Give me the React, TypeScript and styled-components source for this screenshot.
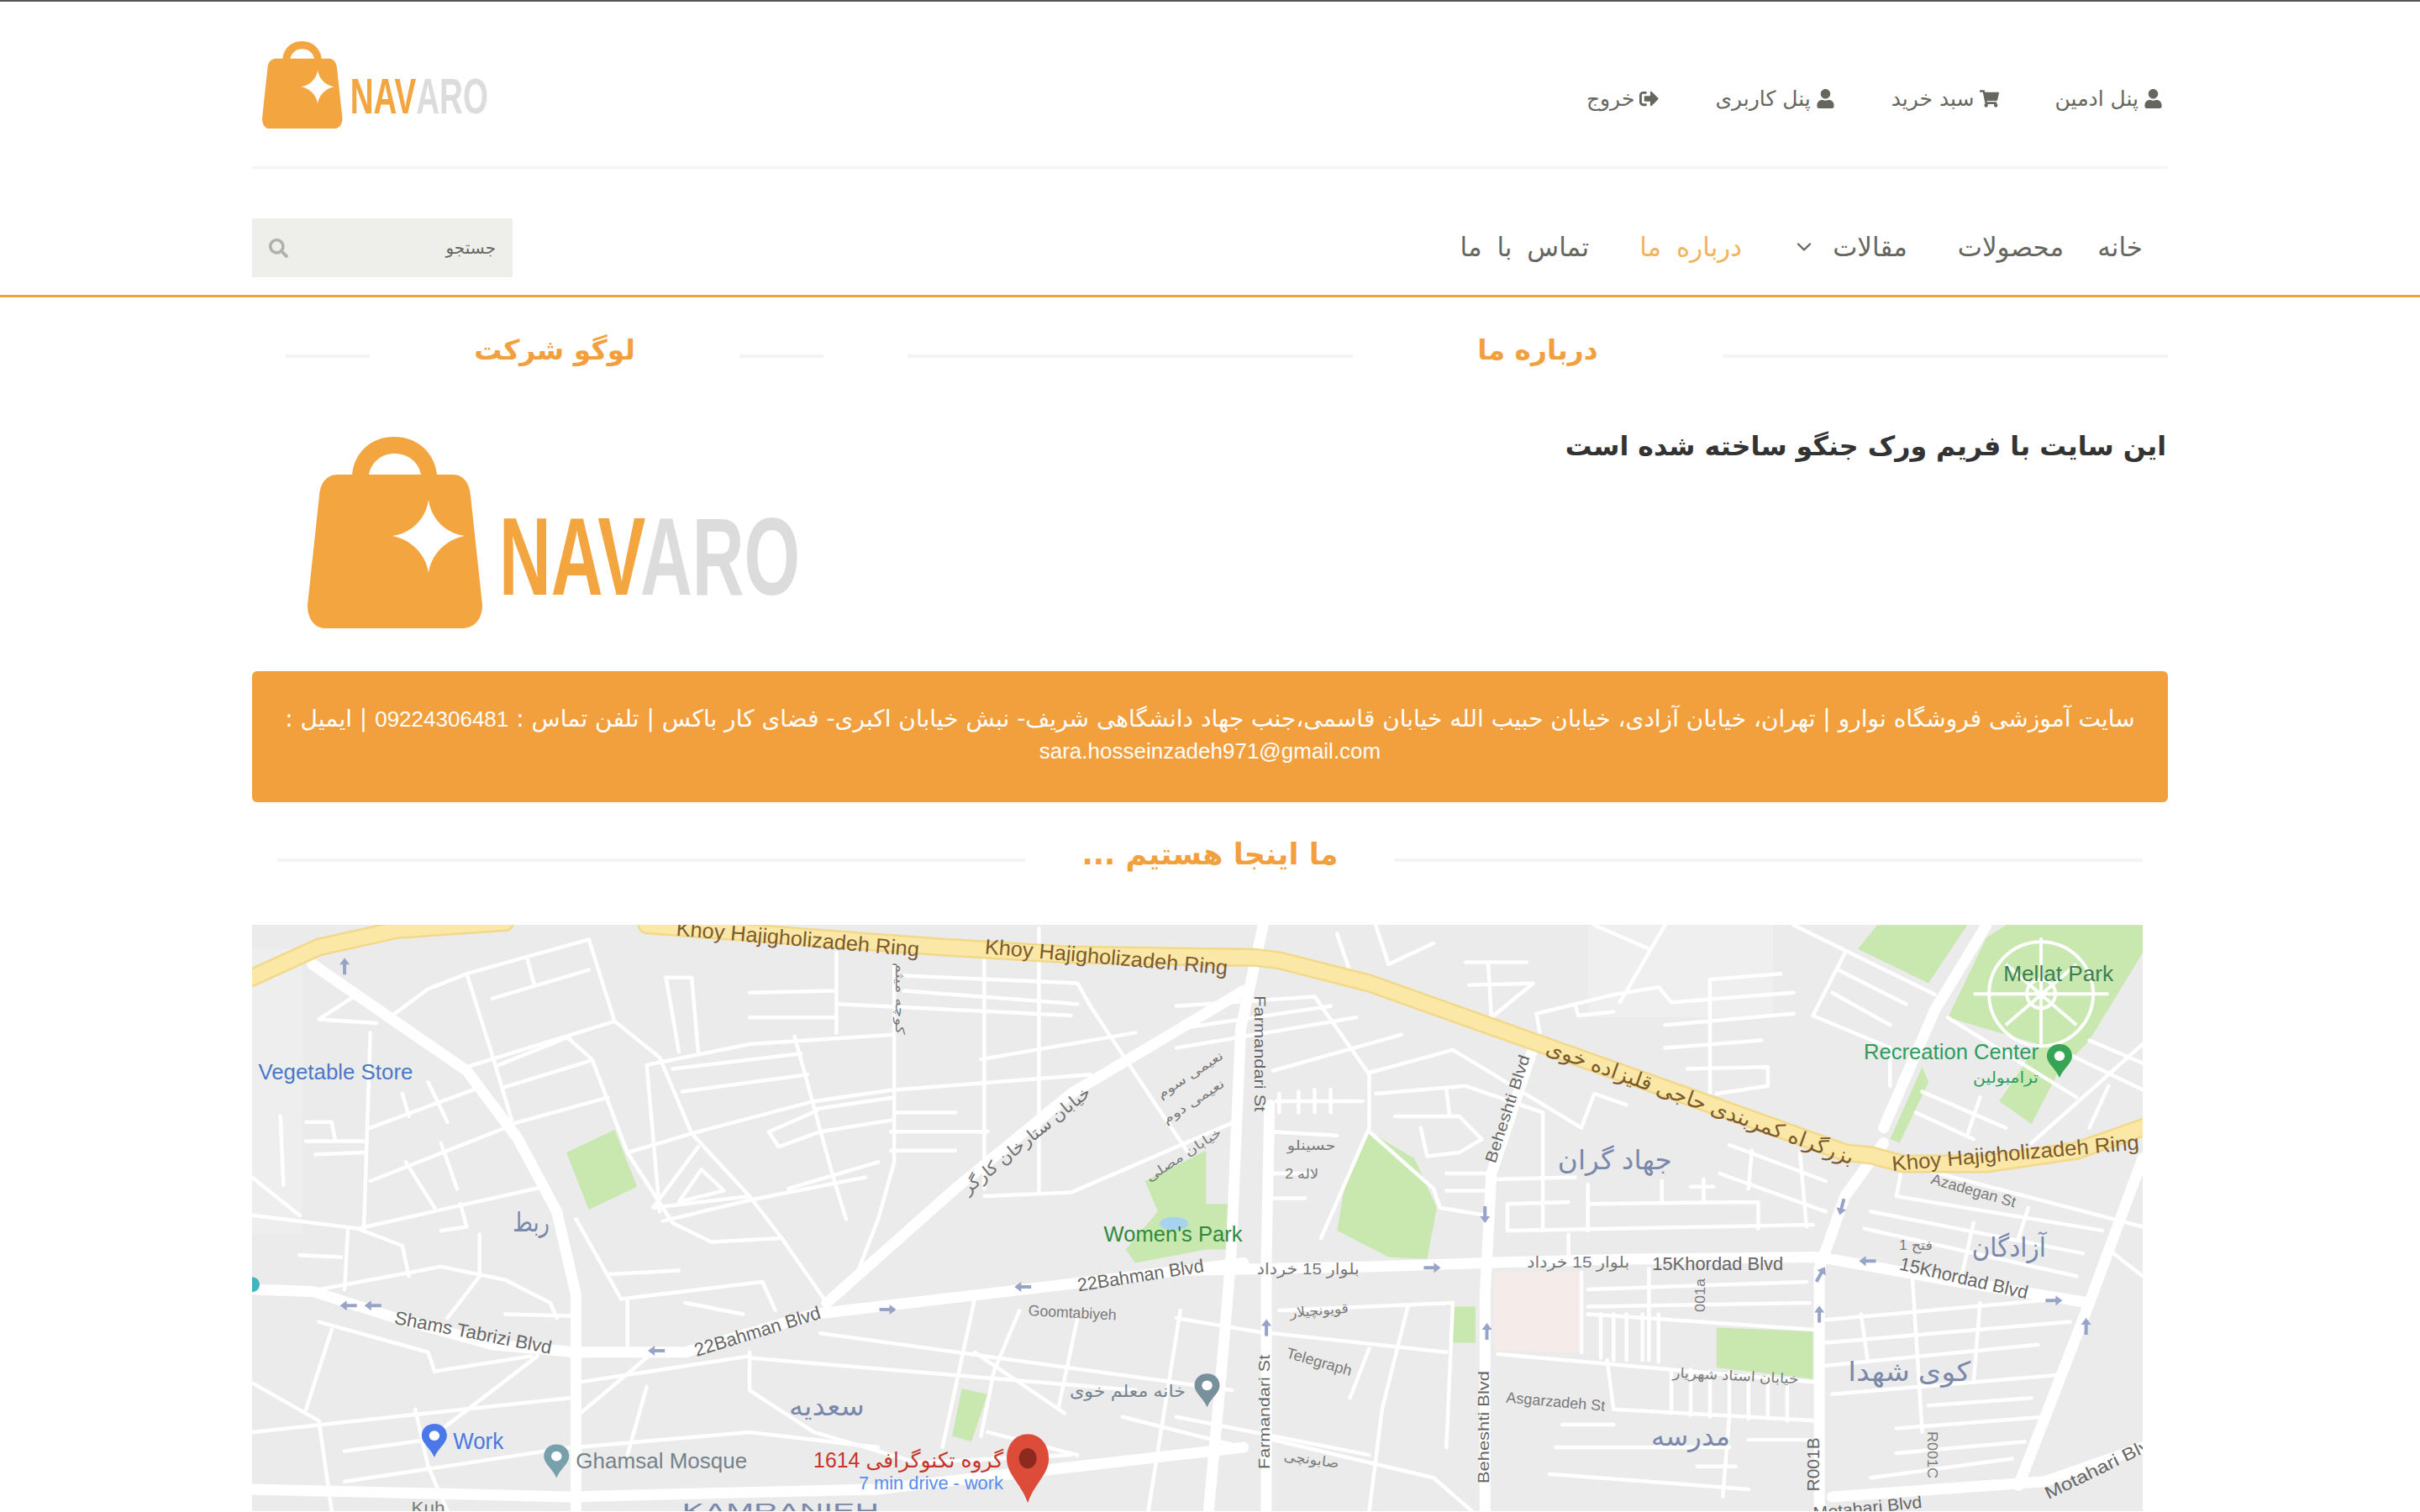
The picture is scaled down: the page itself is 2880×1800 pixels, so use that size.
import styled, { createGlobalStyle } from 'styled-components'
import { FaUser, FaShoppingCart, FaSignOutAlt, FaSearch } from 'react-icons/fa'
import { FiChevronDown } from 'react-icons/fi'

const ORANGE = '#f29f3e'
const FA_FONT = '"DejaVu Sans", sans-serif'
const LATIN_FONT = '"Liberation Sans", "DejaVu Sans", sans-serif'

const GlobalStyle = createGlobalStyle`
  html, body {
    margin: 0;
    padding: 0;
    background: #fff;
    overflow: hidden;
  }
  * { box-sizing: border-box; }
`

const Page = styled.div`
  direction: rtl;
  height: 1800px;
  overflow: hidden;
  border-top: 2px solid #555;
  font-family: ${LATIN_FONT};
`

const Wrap = styled.div`
  margin: 0 300px;
`

const TopBar = styled.div`
  height: 199px;
  border-bottom: 3px solid #f5f5f5;
  display: flex;
  align-items: center;
  justify-content: space-between;
  padding: 0 6px 0 12px;
`

const TopLinks = styled.div`
  display: flex;
  gap: 67px;
  margin-top: 35px;
`

const TopLink = styled.a`
  display: flex;
  align-items: center;
  gap: 6px;
  font-family: ${FA_FONT};
  font-size: 25px;
  color: #66665f;
  svg { font-size: 23px; }
`

const LogoBox = styled.div`
  margin-top: 2px;
  direction: ltr;
  display: flex;
`

const NavOuter = styled.div`
  border-bottom: 3px solid ${ORANGE};
  height: 153px;
`

const NavRow = styled(Wrap)`
  display: flex;
  justify-content: space-between;
  align-items: center;
  height: 150px;
  padding-top: 38px;
`

const NavList = styled.div`
  display: flex;
  align-items: center;
  gap: 60px;
  padding: 0 30px 3px 0;
`

const NavItem = styled.a<{ $active?: boolean; $tight?: boolean }>`
  display: flex;
  align-items: center;
  gap: 20px;
  margin-left: ${p => (p.$tight ? '-20px' : '0')};
  font-family: ${FA_FONT};
  font-size: 31px;
  word-spacing: 8px;
  color: ${p => (p.$active ? '#f4b25f' : '#66665f')};
  svg { font-size: 28px; }
`

const SearchBox = styled.div`
  width: 310px;
  height: 70px;
  background: #eeeeea;
  display: flex;
  align-items: center;
  justify-content: space-between;
  padding: 0 20px;
  font-family: ${FA_FONT};
  font-size: 20px;
  color: #666;
  svg {
    font-size: 23px;
    color: #b0b0ae;
  }
`

const TwoCols = styled(Wrap)`
  display: flex;
  justify-content: space-between;
  padding-top: 47px;
`

const MainCol = styled.div`
  width: 1500px;
`

const SideCol = styled.div`
  width: 640px;
  margin-left: 40px;
`

const SectionTitle = styled.div`
  display: flex;
  align-items: center;
  height: 46px;
`

const TitleLine = styled.div`
  flex: 1;
  height: 4px;
  background: #f4f4f4;
`

const TitleText = styled.h2<{ $size?: number }>`
  width: 440px;
  margin: 0;
  padding-bottom: 14px;
  text-align: center;
  font-family: ${FA_FONT};
  font-weight: 700;
  font-size: ${p => p.$size || 33}px;
  line-height: 46px;
  color: ${ORANGE};
`

const Lead = styled.p`
  margin: 62px 2px 0 0;
  font-family: ${FA_FONT};
  font-weight: 700;
  font-size: 31.7px;
  line-height: 44px;
  color: #333;
`

const BigLogo = styled.div`
  direction: ltr;
  display: flex;
  margin: 73px 0 0 26px;
`

const Alert = styled.div`
  margin-top: 51px;
  height: 156px;
  padding: 38px 20px 0;
  background: ${ORANGE};
  border-radius: 6px;
  text-align: center;
  font-family: ${FA_FONT};
  font-size: 28px;
  line-height: 38px;
  color: #fff;
`

const Latin = styled.span`
  font-family: ${LATIN_FONT};
  font-size: 26px;
`

const MapTitle = styled(SectionTitle)`
  margin: 46px 30px 54px;
`

const MapBox = styled.div`
  width: 2250px;
  height: 698px;
  margin-right: 30px;
  background: #ebebeb;
  direction: ltr;
  overflow: hidden;
  svg { display: block; }
`

const Logo = ({ scale }: { scale: number }) => (
  <svg width={590 * scale} height={228 * scale} viewBox="0 0 590 228">
    <path
      fillRule="evenodd"
      fill="#f3a53f"
      d="M53 45C56 18 76 0 103 0C130 0 151 18 154 45L173 45C186 45 193 56 194 70L208 200C208 218 198 228 183 228L22 228C9 228 0 218 0 200L14 70C15 56 22 45 36 45ZM73 45L135 45C132 30 120 20 103 20C88 20 76 30 73 45Z"
    />
    <path
      fill="#fff"
      d="M144 75C147 98 165 115 187 118C165 122 147 140 144 162C141 140 123 122 101 118C123 115 141 98 144 75Z"
    />
    <text x="228" y="188" fontFamily="Liberation Sans" fontWeight="700" fontSize="131" textLength="358" lengthAdjust="spacingAndGlyphs">
      <tspan fill="#f3a53f">NAV</tspan>
      <tspan fill="#dcdcdc">ARO</tspan>
    </text>
  </svg>
)

type Pt = [number, number]

// crop coordinates of the two map halves, converted to page coords
const ax = (x: number) => 280 + x / 1.307
const bx = (x: number) => 1400 + x / 1.307
const my = (y: number) => 1090 + y / 2.208

const linePath = (pts: Pt[], fx: (x: number) => number) =>
  pts.map((p, i) => `${i ? 'L' : 'M'}${fx(p[0]).toFixed(1)} ${my(p[1]).toFixed(1)}`).join('')

const MAJOR_A: Pt[][] = [
  [[26, 985], [120, 990], [250, 1060], [400, 1130], [530, 1150], [700, 1150], [900, 1050], [1150, 1000], [1400, 950], [1568, 915]],
  [[120, 130], [240, 270], [360, 410], [440, 590], [500, 780], [530, 1000], [530, 1568]],
  [[1568, 200], [1300, 470], [1120, 720], [920, 1020]],
  [[26, 1510], [520, 1530], [1000, 1510], [1568, 1400]],
]

const MAJOR_B: Pt[][] = [
  [[0, 935], [300, 925], [480, 915], [700, 905], [1000, 900], [1200, 960], [1420, 1020]],
  [[135, 27], [100, 300], [85, 900], [70, 1200], [50, 1568]],
  [[145, 500], [140, 900], [140, 1568]],
  [[555, 350], [490, 680], [480, 1000], [480, 1568]],
  [[1100, 600], [1040, 740], [1000, 930], [1000, 1568]],
  [[1503, 640], [1420, 1020], [1310, 1500]],
  [[1260, 27], [1180, 250], [1100, 560]],
  [[1020, 1530], [1350, 1490], [1503, 1400]],
]

const MINOR_A: Pt[][] = [
  [[550, 65], [360, 155], [300, 195], [240, 270]],
  [[550, 65], [590, 280], [660, 375], [710, 575], [800, 740], [850, 850], [920, 1020]],
  [[360, 155], [400, 370], [430, 540]],
  [[590, 280], [360, 400]],
  [[520, 320], [410, 395]],
  [[550, 385], [415, 455]],
  [[580, 480], [430, 550]],
  [[515, 320], [555, 380], [610, 625], [680, 810], [740, 860], [850, 850]],
  [[640, 395], [660, 780]],
  [[640, 395], [800, 340], [1025, 315]],
  [[680, 405], [880, 365]],
  [[695, 465], [890, 420]],
  [[710, 575], [900, 490], [1025, 460]],
  [[610, 625], [710, 575]],
  [[720, 610], [650, 770], [800, 740]],
  [[725, 670], [690, 755], [760, 725], [725, 670]],
  [[665, 805], [800, 750], [980, 690]],
  [[860, 720], [1000, 650]],
  [[870, 320], [930, 690], [950, 800]],
  [[905, 510], [1025, 480]],
  [[830, 570], [905, 515]],
  [[830, 570], [845, 610], [910, 570], [1020, 540]],
  [[1025, 130], [1025, 650], [1000, 800], [970, 930]],
  [[1165, 100], [1165, 720]],
  [[1030, 460], [1330, 420]],
  [[1030, 520], [1120, 520]],
  [[1020, 570], [1170, 570]],
  [[1020, 620], [1120, 620]],
  [[1160, 380], [1400, 310]],
  [[1250, 35], [1250, 730]],
  [[1165, 740], [1300, 730], [1560, 540]],
  [[800, 205], [930, 200]],
  [[800, 270], [930, 270]],
  [[935, 100], [935, 310]],
  [[940, 235], [1300, 265]],
  [[1040, 160], [1310, 180], [1330, 240], [1440, 520], [1480, 620]],
  [[1040, 200], [1310, 235]],
  [[670, 165], [710, 165], [720, 360]],
  [[670, 165], [690, 360]],
  [[400, 220], [550, 145]],
  [[455, 120], [465, 185]],
  [[210, 310], [200, 830]],
  [[220, 285], [130, 275], [180, 220]],
  [[70, 530], [75, 710]],
  [[26, 690], [100, 790]],
  [[26, 790], [190, 825], [480, 715]],
  [[190, 825], [260, 870], [270, 950]],
  [[210, 560], [370, 460]],
  [[260, 470], [270, 530]],
  [[300, 440], [330, 545]],
  [[110, 545], [150, 545], [155, 590]],
  [[110, 595], [200, 595]],
  [[125, 630], [200, 625]],
  [[210, 700], [300, 640], [420, 560]],
  [[265, 650], [310, 770]],
  [[320, 600], [345, 720]],
  [[350, 760], [360, 820], [320, 830]],
  [[175, 830], [170, 985]],
  [[100, 895], [165, 900]],
  [[380, 840], [380, 950], [330, 1060]],
  [[130, 985], [320, 925], [420, 960], [490, 1020], [500, 1060]],
  [[420, 1050], [530, 1055]],
  [[530, 800], [580, 950], [600, 1010]],
  [[580, 945], [690, 935]],
  [[600, 1010], [820, 965], [840, 1040]],
  [[700, 1020], [790, 1050]],
  [[610, 1010], [610, 1150]],
  [[130, 1070], [300, 1150], [310, 1200], [460, 1160]],
  [[150, 1090], [110, 1300]],
  [[26, 1230], [130, 1330], [150, 1568]],
  [[26, 1360], [520, 1270]],
  [[170, 1410], [300, 1380], [470, 1160]],
  [[280, 1300], [300, 1450], [330, 1568]],
  [[170, 1490], [520, 1400]],
  [[530, 1230], [800, 1160]],
  [[530, 1320], [650, 1150]],
  [[640, 1240], [610, 1420]],
  [[530, 1400], [800, 1360], [1000, 1400]],
  [[800, 1150], [800, 1250], [900, 1360], [1060, 1440], [1300, 1420]],
  [[800, 1165], [1400, 1250]],
  [[1150, 1010], [1100, 1400]],
  [[910, 1100], [1550, 1250]],
  [[1220, 1040], [1180, 1200], [1160, 1370]],
  [[1310, 1060], [1280, 1300]],
  [[1470, 1040], [1420, 1568]],
  [[1150, 1150], [1290, 1310]],
  [[1170, 1360], [1310, 1420]],
  [[1380, 1320], [1568, 1400]],
]

const MINOR_B: Pt[][] = [
  [[310, 27], [330, 130], [400, 75]],
  [[250, 50], [270, 150]],
  [[450, 125], [545, 125]],
  [[485, 130], [490, 270]],
  [[455, 185], [555, 180], [490, 270]],
  [[560, 260], [680, 210], [750, 190], [770, 230], [960, 205]],
  [[560, 260], [565, 310]],
  [[620, 235], [625, 265], [680, 255]],
  [[650, 27], [735, 90]],
  [[760, 27], [690, 230]],
  [[830, 170], [940, 155]],
  [[830, 170], [830, 480]],
  [[760, 290], [960, 260]],
  [[760, 350], [910, 330]],
  [[795, 405], [920, 400], [920, 450], [840, 470]],
  [[960, 27], [1180, 210]],
  [[1040, 100], [990, 265], [1110, 350], [1110, 450]],
  [[1030, 145], [1135, 235]],
  [[1020, 205], [1110, 290]],
  [[1200, 270], [1400, 480]],
  [[1160, 465], [1290, 560]],
  [[1150, 520], [1240, 590]],
  [[1250, 480], [1230, 580]],
  [[1380, 360], [1503, 460]],
  [[1420, 330], [1503, 390]],
  [[1450, 450], [1420, 560]],
  [[1503, 340], [1330, 600]],
  [[0, 240], [215, 215], [300, 420], [300, 560], [225, 850]],
  [[0, 350], [280, 270]],
  [[0, 300], [240, 240]],
  [[150, 410], [350, 315]],
  [[300, 415], [430, 355], [630, 560], [650, 470], [700, 500]],
  [[310, 470], [450, 450], [570, 520], [570, 830]],
  [[420, 460], [425, 530]],
  [[155, 490], [290, 490]],
  [[160, 470], [160, 520]],
  [[190, 465], [190, 520]],
  [[215, 460], [215, 520]],
  [[240, 460], [240, 520]],
  [[145, 570], [250, 580]],
  [[150, 680], [210, 680]],
  [[145, 745], [200, 745]],
  [[340, 530], [440, 530], [475, 590], [440, 625], [390, 635], [380, 560]],
  [[300, 570], [400, 720], [410, 770], [480, 790]],
  [[420, 680], [480, 680]],
  [[420, 725], [480, 725]],
  [[500, 695], [620, 690]],
  [[515, 760], [610, 755]],
  [[515, 760], [515, 830], [990, 815]],
  [[640, 760], [905, 755], [905, 825]],
  [[640, 710], [640, 830]],
  [[755, 700], [755, 755]],
  [[820, 695], [820, 755]],
  [[800, 715], [835, 715]],
  [[845, 680], [1010, 780]],
  [[860, 605], [1010, 700]],
  [[895, 620], [890, 720]],
  [[970, 625], [980, 820]],
  [[610, 840], [610, 900]],
  [[1130, 650], [1120, 740], [1440, 830]],
  [[1080, 780], [1410, 890]],
  [[1070, 825], [1400, 950]],
  [[1240, 810], [1220, 960]],
  [[1325, 770], [1310, 850]],
  [[1140, 660], [1503, 820]],
  [[1450, 880], [1503, 950]],
  [[630, 940], [630, 1150]],
  [[640, 985], [980, 965]],
  [[640, 1030], [985, 1020]],
  [[735, 930], [735, 1170]],
  [[640, 1050], [990, 1090]],
  [[660, 1050], [660, 1165]],
  [[680, 1050], [680, 1170]],
  [[700, 1050], [700, 1170]],
  [[725, 1050], [725, 1170]],
  [[750, 1050], [750, 1175]],
  [[500, 1155], [1000, 1230]],
  [[1010, 1065], [1370, 1010]],
  [[1010, 1125], [1390, 1070]],
  [[1010, 1185], [1340, 1130]],
  [[1020, 1260], [1370, 1210]],
  [[1065, 1050], [1075, 1170]],
  [[1145, 960], [1160, 1360]],
  [[1250, 1020], [1240, 1230]],
  [[1170, 1290], [1330, 1270]],
  [[1120, 1350], [1350, 1320]],
  [[1120, 1415], [1320, 1385]],
  [[1080, 1480], [1300, 1430]],
  [[770, 1195], [770, 1310]],
  [[800, 1195], [800, 1315]],
  [[830, 1200], [830, 1320]],
  [[860, 1205], [860, 1320]],
  [[890, 1210], [890, 1325]],
  [[920, 1215], [920, 1325]],
  [[950, 1220], [950, 1330]],
  [[680, 1300], [1000, 1330]],
  [[680, 1300], [670, 1170]],
  [[860, 1320], [850, 1530]],
  [[580, 1470], [890, 1510]],
  [[600, 1340], [680, 1340]],
  [[590, 1400], [860, 1400]],
  [[890, 1380], [985, 1380]],
  [[810, 1450], [870, 1450]],
  [[160, 1040], [430, 1020], [420, 1400]],
  [[150, 1100], [420, 1150]],
  [[0, 1060], [140, 1100]],
  [[360, 1030], [320, 1300], [300, 1568]],
  [[150, 1380], [400, 1480], [460, 1568]],
  [[300, 1140], [270, 1270]],
  [[0, 1320], [300, 1420]],
]

const HIGHWAY_A: Pt[][] = [
  [[26, 165], [130, 85], [250, 40], [420, 20]],
  [[640, 27], [900, 60], [1100, 85], [1300, 105], [1568, 112]],
]

const HIGHWAY_B: Pt[] = [
  [0, 110], [120, 112], [160, 120], [300, 180], [550, 330], [800, 480], [1040, 625], [1080, 632], [1130, 655], [1260, 655], [1400, 620], [1510, 555],
]

const GREENS: { at: 'a' | 'b'; pts: Pt[]; fill?: string }[] = [
  { at: 'a', pts: [[515, 625], [590, 565], [625, 715], [550, 775]] },
  { at: 'a', pts: [[1415, 700], [1510, 620], [1510, 760], [1545, 760], [1545, 880], [1510, 880], [1400, 915], [1385, 880], [1435, 780]] },
  { at: 'a', pts: [[1130, 1245], [1170, 1260], [1145, 1385], [1115, 1370]] },
  { at: 'b', pts: [[300, 570], [370, 640], [405, 770], [390, 905], [330, 900], [250, 830], [265, 680]] },
  { at: 'b', pts: [[1060, 90], [1090, 27], [1230, 27], [1170, 180]] },
  { at: 'b', pts: [[1290, 27], [1503, 27], [1503, 100], [1420, 330], [1370, 420], [1330, 550], [1280, 490], [1340, 340], [1200, 270], [1260, 60]] },
  { at: 'b', pts: [[430, 1030], [465, 1030], [465, 1125], [430, 1125]] },
  { at: 'b', pts: [[840, 1085], [990, 1095], [990, 1220], [840, 1190]] },
  { at: 'b', pts: [[1160, 400], [1110, 590], [1125, 600], [1170, 440]] },
  { at: 'b', pts: [[495, 940], [630, 940], [630, 1150], [495, 1145]], fill: '#f5ebe9' },
]

type Label = {
  x: number
  y: number
  t: string
  w: number
  s: number
  c: string
  r?: number
}

const ROAD = '#7a7a7a'
const BROWN = '#7c5a2e'
const AREA = '#7a88ab'
const PARK = '#2f8a3c'
const BLUE = '#4a78c8'

const LABELS: Label[] = [
  { x: ax(875), y: my(62), t: 'Khoy Hajigholizadeh Ring', w: 290, s: 25, c: BROWN, r: 5 },
  { x: ax(1355), y: my(110), t: 'Khoy Hajigholizadeh Ring', w: 290, s: 25, c: BROWN, r: 5 },
  { x: ax(156), y: my(412), t: 'Vegetable Store', w: 184, s: 26, c: BLUE },
  { x: ax(460), y: my(808), t: 'ربط', w: 44, s: 32, c: AREA },
  { x: ax(370), y: my(1098), t: 'Shams Tabrizi Blvd', w: 190, s: 22, c: '#666', r: 11 },
  { x: ax(812), y: my(1095), t: '22Bahman Blvd', w: 156, s: 22, c: '#666', r: -17 },
  { x: ax(1408), y: my(948), t: '22Bahman Blvd', w: 152, s: 22, c: '#666', r: -9 },
  { x: 1396, y: my(840), t: "Women's Park", w: 165, s: 25, c: PARK },
  { x: ax(1302), y: my(1046), t: 'Goomtabiyeh', w: 105, s: 18, c: ROAD, r: 3 },
  { x: ax(1388), y: my(1252), t: 'خانه معلم خوی', w: 138, s: 20, c: '#74838f' },
  { x: ax(920), y: my(1292), t: 'سعدیه', w: 90, s: 32, c: AREA },
  { x: ax(378), y: my(1385), t: 'Work', w: 60, s: 27, c: '#4a78e0' },
  { x: ax(663), y: my(1436), t: 'Ghamsal Mosque', w: 204, s: 26, c: '#75828a' },
  { x: ax(1047), y: my(1432), t: 'گروه تکنوگرافی 1614', w: 226, s: 25, c: '#c5352a' },
  { x: ax(1082), y: my(1494), t: '7 min drive - work', w: 172, s: 22, c: '#5a8dee' },
  { x: ax(848), y: my(1566), t: 'KAMRANIEH', w: 234, s: 24, c: AREA },
  { x: ax(300), y: my(1558), t: 'Kuh', w: 40, s: 20, c: ROAD },
  { x: ax(1230), y: my(592), t: 'خیابان ستارخان کارگر', w: 190, s: 20, c: '#6f6f6f', r: -39 },
  { x: ax(1485), y: my(420), t: 'نعیمی سوم', w: 90, s: 15, c: ROAD, r: -33 },
  { x: ax(1490), y: my(490), t: 'نعیمی دوم', w: 84, s: 15, c: ROAD, r: -33 },
  { x: ax(1475), y: my(630), t: 'خیابان مصلی', w: 104, s: 15, c: ROAD, r: -33 },
  { x: ax(1035), y: my(220), t: 'کوچه میثم', w: 86, s: 15, c: ROAD, r: 90 },
  { x: bx(130), y: my(365), t: 'Farmandari St', w: 138, s: 19, c: '#666', r: 90 },
  { x: bx(515), y: my(510), t: 'Beheshti Blvd', w: 134, s: 19, c: '#666', r: -72 },
  { x: bx(815), y: my(492), t: 'بزرگراه کمربندی حاجی قلیزاده خوی', w: 388, s: 25, c: BROWN, r: 20 },
  { x: bx(1305), y: my(625), t: 'Khoy Hajigholizadeh Ring', w: 295, s: 25, c: BROWN, r: -5 },
  { x: bx(682), y: my(645), t: 'جهاد گران', w: 136, s: 32, c: AREA },
  { x: bx(1372), y: my(155), t: 'Mellat Park', w: 131, s: 25, c: '#3d7f52' },
  { x: bx(1205), y: my(360), t: 'Recreation Center', w: 208, s: 25, c: '#2f9c5e' },
  { x: bx(1290), y: my(428), t: 'ترامبولین', w: 78, s: 18, c: '#2f9c5e' },
  { x: bx(1240), y: my(725), t: 'Azadegan St', w: 104, s: 18, c: ROAD, r: 16 },
  { x: bx(1295), y: my(875), t: 'آزادگان', w: 88, s: 32, c: AREA },
  { x: bx(1150), y: my(868), t: 'فتح 1', w: 40, s: 16, c: ROAD },
  { x: bx(842), y: my(918), t: '15Khordad Blvd', w: 156, s: 22, c: '#666' },
  { x: bx(1225), y: my(955), t: '15Khordad Blvd', w: 156, s: 22, c: '#666', r: 13 },
  { x: bx(205), y: my(930), t: 'بلوار 15 خرداد', w: 122, s: 19, c: '#777' },
  { x: bx(625), y: my(912), t: 'بلوار 15 خرداد', w: 122, s: 19, c: '#777' },
  { x: bx(210), y: my(605), t: 'حسینلو', w: 58, s: 16, c: ROAD },
  { x: bx(195), y: my(682), t: 'لاله 2', w: 40, s: 16, c: ROAD },
  { x: bx(222), y: my(1040), t: 'قویونچیلار', w: 70, s: 16, c: ROAD, r: -5 },
  { x: bx(222), y: my(1175), t: 'Telegraph', w: 80, s: 18, c: ROAD, r: 16 },
  { x: bx(815), y: my(1000), t: '001a', w: 40, s: 16, c: ROAD, r: -90 },
  { x: bx(137), y: my(1307), t: 'Farmandari St', w: 136, s: 19, c: '#666', r: -90 },
  { x: bx(478), y: my(1347), t: 'Beheshti Blvd', w: 134, s: 19, c: '#666', r: -90 },
  { x: bx(590), y: my(1280), t: 'Asgarzadeh St', w: 118, s: 18, c: ROAD, r: 5 },
  { x: bx(870), y: my(1212), t: 'خیابان استاد شهریار', w: 150, s: 16, c: ROAD, r: 3 },
  { x: bx(1140), y: my(1200), t: 'کوی شهدا', w: 146, s: 32, c: AREA },
  { x: bx(800), y: my(1370), t: 'مدرسه', w: 94, s: 32, c: AREA },
  { x: bx(990), y: my(1445), t: 'R001B', w: 64, s: 20, c: '#666', r: -90 },
  { x: bx(1175), y: my(1420), t: 'R001C', w: 56, s: 16, c: ROAD, r: 90 },
  { x: bx(1440), y: my(1450), t: 'Motahari Blvd', w: 150, s: 21, c: '#666', r: -26 },
  { x: bx(1075), y: my(1558), t: 'Motahari Blvd', w: 130, s: 20, c: '#666', r: -6 },
  { x: bx(210), y: my(1432), t: 'صابونچی', w: 66, s: 16, c: ROAD, r: 8 },
]

// one way arrows: [x, y, pointing direction in degrees]
const ARROWS: [number, number, number][] = [
  [ax(170), my(135), 0],
  [ax(176), my(1027), -90],
  [ax(214), my(1027), -90],
  [ax(655), my(1146), -90],
  [ax(1015), my(1038), 90],
  [ax(1225), my(978), -90],
  [bx(140), my(1085), 0],
  [bx(398), my(928), 90],
  [bx(480), my(788), 180],
  [bx(483), my(1095), 0],
  [bx(1035), my(768), 195],
  [bx(1002), my(945), 30],
  [bx(1000), my(1050), 0],
  [bx(1075), my(910), -90],
  [bx(1365), my(1014), 90],
  [bx(1415), my(1082), 0],
]

const Pin = ({ x, y, w, h, fill, dot }: { x: number; y: number; w: number; h: number; fill: string; dot: string }) => (
  <g transform={`translate(${x} ${y}) scale(${w / 24} ${h / 34})`}>
    <path fill={fill} d="M12 0C5 0 0 5 0 12C0 20 8 24 12 34C16 24 24 20 24 12C24 5 19 0 12 0Z" />
    <circle cx="12" cy="12" r="5" fill={dot} />
  </g>
)

const CityMap = () => (
  <svg width="2250" height="698" viewBox="300 1102 2250 698">
    <rect x="300" y="1102" width="2250" height="698" fill="#ebebeb" />
    <rect x="300" y="1130" width="60" height="340" fill="#eeeeee" />
    <rect x="1890" y="1102" width="220" height="110" fill="#efefef" />
    {GREENS.map((g, i) => (
      <polygon
        key={i}
        fill={g.fill || '#c8e8b0'}
        points={g.pts.map(p => `${(g.at === 'a' ? ax : bx)(p[0]).toFixed(1)},${my(p[1]).toFixed(1)}`).join(' ')}
      />
    ))}
    <ellipse cx={ax(1460)} cy={my(812)} rx="17" ry="8" fill="#a8d3f0" />
    <g fill="none" stroke="#fff" strokeLinejoin="round" strokeLinecap="round">
      <g strokeWidth="4.5">
        {MINOR_A.map((r, i) => <path key={i} d={linePath(r, ax)} />)}
        {MINOR_B.map((r, i) => <path key={i} d={linePath(r, bx)} />)}
      </g>
      <g strokeWidth="13">
        {MAJOR_A.map((r, i) => <path key={i} d={linePath(r, ax)} />)}
        {MAJOR_B.map((r, i) => <path key={i} d={linePath(r, bx)} />)}
      </g>
    </g>
    {/* mellat park paths */}
    <g fill="none" stroke="#fff" strokeWidth="4">
      <circle cx={bx(1345)} cy={my(208)} r="62" />
      <circle cx={bx(1345)} cy={my(208)} r="17" />
      <path d={`M${bx(1345)} ${my(60)}V${my(340)}M${bx(1240)} ${my(208)}H${bx(1450)}M${bx(1290)} ${my(130)}L${bx(1400)} ${my(290)}M${bx(1400)} ${my(130)}L${bx(1290)} ${my(290)}`} />
    </g>
    <g fill="none" strokeLinecap="round" strokeLinejoin="round">
      <g stroke="#f2d98a" strokeWidth="22">
        {HIGHWAY_A.map((r, i) => <path key={i} d={linePath(r, ax)} />)}
        <path d={linePath(HIGHWAY_B, bx)} />
      </g>
      <g stroke="#fbe8a6" strokeWidth="17">
        {HIGHWAY_A.map((r, i) => <path key={i} d={linePath(r, ax)} />)}
        <path d={linePath(HIGHWAY_B, bx)} />
      </g>
    </g>
    {ARROWS.map(([x, y, r], i) => (
      <path
        key={i}
        transform={`translate(${x} ${y}) rotate(${r})`}
        fill="#98a3c8"
        d="M0 -10L6 -2L2 -2L2 10L-2 10L-2 -2L-6 -2Z"
      />
    ))}
    {LABELS.map((l, i) => (
      <text
        key={i}
        transform={`translate(${l.x.toFixed(1)} ${l.y.toFixed(1)}) rotate(${l.r || 0})`}
        textAnchor="middle"
        dominantBaseline="central"
        fontFamily={LATIN_FONT}
        fontSize={l.s}
        fill={l.c}
        textLength={l.w}
        lengthAdjust="spacingAndGlyphs"
      >
        {l.t}
      </text>
    ))}
    <circle cx="300" cy={my(972)} r="9" fill="#3fb6bf" />
    <Pin x={ax(290)} y={my(1338)} w={30} h={40} fill="#4a78e8" dot="#fff" />
    <Pin x={ax(480)} y={my(1392)} w={30} h={40} fill="#78a0ac" dot="#fff" />
    <Pin x={ax(1492)} y={my(1206)} w={30} h={40} fill="#78909c" dot="#fff" />
    <Pin x={bx(1354)} y={my(340)} w={30} h={40} fill="#35a455" dot="#fff" />
    <Pin x={ax(1200)} y={my(1365)} w={50} h={82} fill="#dd4b39" dot="#8c2a20" />
  </svg>
)

const App = () => (
  <>
    <GlobalStyle />
    <Page>
      <Wrap>
        <TopBar>
          <TopLinks>
            <TopLink><FaUser /> پنل ادمین</TopLink>
            <TopLink><FaShoppingCart /> سبد خرید</TopLink>
            <TopLink><FaUser /> پنل کاربری</TopLink>
            <TopLink><FaSignOutAlt /> خروج</TopLink>
          </TopLinks>
          <LogoBox><Logo scale={0.459} /></LogoBox>
        </TopBar>
      </Wrap>
      <NavOuter>
        <NavRow>
          <NavList>
            <NavItem $tight>خانه</NavItem>
            <NavItem>محصولات</NavItem>
            <NavItem>مقالات <FiChevronDown /></NavItem>
            <NavItem $active>درباره ما</NavItem>
            <NavItem>تماس با ما</NavItem>
          </NavList>
          <SearchBox>
            <span>جستجو</span>
            <FaSearch />
          </SearchBox>
        </NavRow>
      </NavOuter>
      <TwoCols>
        <MainCol>
          <SectionTitle>
            <TitleLine />
            <TitleText>درباره ما</TitleText>
            <TitleLine />
          </SectionTitle>
          <Lead>این سایت با فریم ورک جنگو ساخته شده است</Lead>
        </MainCol>
        <SideCol>
          <SectionTitle>
            <TitleLine />
            <TitleText>لوگو شرکت</TitleText>
            <TitleLine />
          </SectionTitle>
          <BigLogo><Logo scale={1} /></BigLogo>
        </SideCol>
      </TwoCols>
      <Wrap>
        <Alert>
          سایت آموزشی فروشگاه نوارو | تهران، خیابان آزادی، خیابان حبیب الله خیابان قاسمی،جنب جهاد دانشگاهی شریف- نبش خیابان اکبری- فضای کار باکس | تلفن تماس : <Latin>09224306481</Latin> | ایمیل : <Latin>sara.hosseinzadeh971@gmail.com</Latin>
        </Alert>
        <MapTitle>
          <TitleLine />
          <TitleText $size={35}>ما اینجا هستیم ...</TitleText>
          <TitleLine />
        </MapTitle>
        <MapBox><CityMap /></MapBox>
      </Wrap>
    </Page>
  </>
)

export default App
